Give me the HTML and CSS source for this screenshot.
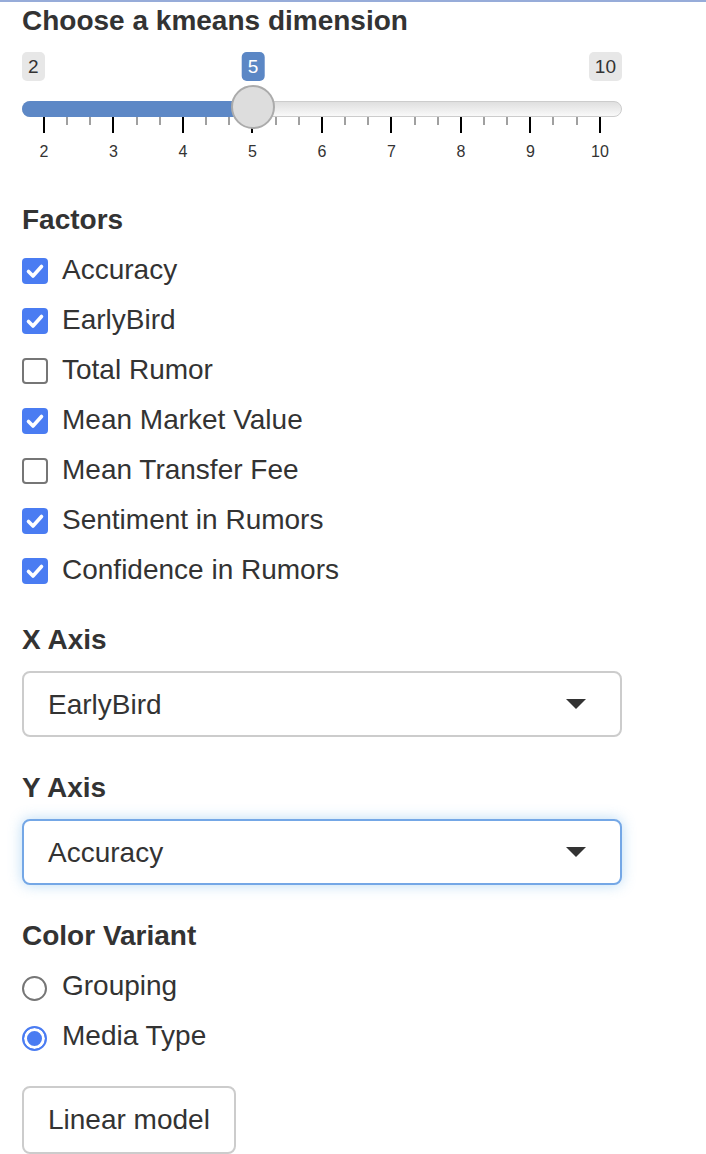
FILE: index.html
```html
<!DOCTYPE html>
<html>
<head>
<meta charset="utf-8">
<link rel="stylesheet" href="styles.css">
</head>
<body>
<div class="topline"></div>
<div class="sidebar">
  <div class="group group-slider">
    <div class="ctl-label">Choose a kmeans dimension</div>
    <div class="slider">
      <div class="badges">
        <span class="badge">2</span>
        <span class="badge">10</span>
        <span class="badge badge-single" style="left:231px">5</span>
      </div>
      <div class="track">
        <div class="bar" style="width:231px"></div>
        <div class="handle" style="left:231px"></div>
      </div>
      <div class="ticks">
        <span class="tick major"></span><span class="tick"></span><span class="tick"></span>
        <span class="tick major"></span><span class="tick"></span><span class="tick"></span>
        <span class="tick major"></span><span class="tick"></span><span class="tick"></span>
        <span class="tick major"></span><span class="tick"></span><span class="tick"></span>
        <span class="tick major"></span><span class="tick"></span><span class="tick"></span>
        <span class="tick major"></span><span class="tick"></span><span class="tick"></span>
        <span class="tick major"></span><span class="tick"></span><span class="tick"></span>
        <span class="tick major"></span><span class="tick"></span><span class="tick"></span>
        <span class="tick major"></span>
      </div>
      <div class="tick-labels">
        <span>2</span><span>3</span><span>4</span><span>5</span><span>6</span><span>7</span><span>8</span><span>9</span><span>10</span>
      </div>
    </div>
  </div>

  <div class="group">
    <div class="ctl-label field-label">Factors</div>
    <div class="options">
      <div class="option"><span class="check checked"><svg viewBox="0 0 26 26" width="26" height="26"><path d="M6.5 13.5 L11 18 L19.5 8.5" fill="none" stroke="#fff" stroke-width="3.6" stroke-linecap="round" stroke-linejoin="round"/></svg></span><span class="opt-text">Accuracy</span></div>
      <div class="option"><span class="check checked"><svg viewBox="0 0 26 26" width="26" height="26"><path d="M6.5 13.5 L11 18 L19.5 8.5" fill="none" stroke="#fff" stroke-width="3.6" stroke-linecap="round" stroke-linejoin="round"/></svg></span><span class="opt-text">EarlyBird</span></div>
      <div class="option"><span class="check"></span><span class="opt-text">Total Rumor</span></div>
      <div class="option"><span class="check checked"><svg viewBox="0 0 26 26" width="26" height="26"><path d="M6.5 13.5 L11 18 L19.5 8.5" fill="none" stroke="#fff" stroke-width="3.6" stroke-linecap="round" stroke-linejoin="round"/></svg></span><span class="opt-text">Mean Market Value</span></div>
      <div class="option"><span class="check"></span><span class="opt-text">Mean Transfer Fee</span></div>
      <div class="option"><span class="check checked"><svg viewBox="0 0 26 26" width="26" height="26"><path d="M6.5 13.5 L11 18 L19.5 8.5" fill="none" stroke="#fff" stroke-width="3.6" stroke-linecap="round" stroke-linejoin="round"/></svg></span><span class="opt-text">Sentiment in Rumors</span></div>
      <div class="option"><span class="check checked"><svg viewBox="0 0 26 26" width="26" height="26"><path d="M6.5 13.5 L11 18 L19.5 8.5" fill="none" stroke="#fff" stroke-width="3.6" stroke-linecap="round" stroke-linejoin="round"/></svg></span><span class="opt-text">Confidence in Rumors</span></div>
    </div>
  </div>

  <div class="group">
    <div class="ctl-label field-label label-select">X Axis</div>
    <div class="select"><span class="select-text">EarlyBird</span><span class="caret"></span></div>
  </div>

  <div class="group">
    <div class="ctl-label field-label label-select">Y Axis</div>
    <div class="select focused"><span class="select-text">Accuracy</span><span class="caret"></span></div>
  </div>

  <div class="group">
    <div class="ctl-label field-label">Color Variant</div>
    <div class="options">
      <div class="option"><span class="radio"></span><span class="opt-text radio-text">Grouping</span></div>
      <div class="option"><span class="radio checked"></span><span class="opt-text radio-text">Media Type</span></div>
    </div>
  </div>

  <button class="btn">Linear model</button>
</div>
</body>
</html>
```

FILE: styles.css
```css
html, body {
  margin: 0;
  padding: 0;
  background: #ffffff;
}

body {
  font-family: "Liberation Sans", Arial, Helvetica, sans-serif;
  color: #333333;
  font-size: 28px;
  line-height: 40px;
}

.topline {
  height: 2px;
  background: #97acd9;
}

.sidebar {
  width: 600px;
  padding-left: 22px;
}

.group {
  margin-bottom: 30px;
}

.group-slider {
  margin-bottom: 38px;
}

.ctl-label {
  font-weight: bold;
  font-size: 28px;
  line-height: 40px;
}

.group-slider .ctl-label {
  line-height: 38px;
}

.field-label {
  padding-top: 1px;
}

.label-select {
  margin-bottom: 11px;
}

/* slider */
.slider {
  padding-top: 12px;
}

.badges {
  position: relative;
  display: flex;
  justify-content: space-between;
  height: 29px;
}

.badge {
  display: block;
  height: 29px;
  line-height: 29px;
  font-size: 19px;
  padding: 0 6px;
  border-radius: 5px;
  background: #e7e7e7;
  color: #333333;
}

.badge-single {
  position: absolute;
  top: 0;
  transform: translateX(-50%);
  background: #5b87c5;
  color: #ffffff;
  padding: 0 6px;
}

.track {
  position: relative;
  margin-top: 20px;
  height: 16px;
  box-sizing: border-box;
  border: 1px solid #cccccc;
  border-radius: 8px;
  background: linear-gradient(to bottom, #dfdfdf, #f9f9f9);
}

.bar {
  position: absolute;
  top: -1px;
  left: -1px;
  height: 16px;
  background: #5d88c6;
  border-radius: 8px 0 0 8px;
}

.handle {
  position: absolute;
  top: -17px;
  width: 44px;
  height: 44px;
  margin-left: -23px;
  box-sizing: border-box;
  border: 2px solid #ababab;
  border-radius: 50%;
  background: #dddddd;
}

.ticks {
  display: flex;
  justify-content: space-between;
  align-items: flex-start;
  margin-left: 21px;
  width: 558px;
  height: 16px;
}

.tick {
  display: block;
  width: 2px;
  height: 8px;
  background: #a0a0a0;
}

.tick.major {
  height: 16px;
  background: #000000;
}

.tick-labels {
  display: flex;
  justify-content: space-between;
  margin-top: 10px;
  margin-left: 22px;
  width: 556px;
  font-size: 16px;
  line-height: 18px;
  color: #333333;
}

.tick-labels span {
  width: 0;
  display: flex;
  justify-content: center;
  white-space: nowrap;
}

/* checkbox / radio options */
.options {
  padding-top: 9px;
}

.option {
  display: flex;
  align-items: flex-start;
  height: 40px;
  margin-bottom: 10px;
}

.option:last-child {
  margin-bottom: 0;
}

.opt-text {
  margin-left: 14px;
  padding-top: 1px;
  font-size: 28px;
  line-height: 40px;
}

.radio-text {
  margin-left: 15px;
}

.check {
  display: block;
  flex: none;
  margin-top: 9px;
  width: 26px;
  height: 26px;
  box-sizing: border-box;
  border: 2px solid #767676;
  border-radius: 4px;
  background: #ffffff;
}

.check.checked {
  border: none;
  background: #4a7cf2;
}

.check svg {
  display: block;
}

.radio {
  display: block;
  flex: none;
  margin-top: 11px;
  width: 25px;
  height: 25px;
  box-sizing: border-box;
  border: 2px solid #767676;
  border-radius: 50%;
  background: #ffffff;
}

.radio.checked {
  border-color: #4a7cf2;
  background: #4a7cf2;
  box-shadow: inset 0 0 0 3px #ffffff;
}

/* selects */
.select {
  display: flex;
  align-items: center;
  justify-content: space-between;
  height: 66px;
  box-sizing: border-box;
  border: 2px solid #cccccc;
  border-radius: 8px;
  padding: 0 34px 0 24px;
  background: #ffffff;
}

.select.focused {
  border-color: #74a7e6;
  box-shadow: 0 0 14px rgba(102, 175, 233, 0.45);
}

.select-text {
  font-size: 28px;
  line-height: 40px;
  padding-top: 1px;
}

.caret {
  display: block;
  width: 0;
  height: 0;
  border-left: 10px solid transparent;
  border-right: 10px solid transparent;
  border-top: 10px solid #333333;
}

/* button */
.btn {
  display: block;
  margin-top: 31px;
  height: 68px;
  padding: 0 24px;
  box-sizing: border-box;
  border: 2px solid #cccccc;
  border-radius: 8px;
  background: #ffffff;
  color: #333333;
  font-family: "Liberation Sans", Arial, Helvetica, sans-serif;
  font-size: 28px;
  line-height: 40px;
}
```
